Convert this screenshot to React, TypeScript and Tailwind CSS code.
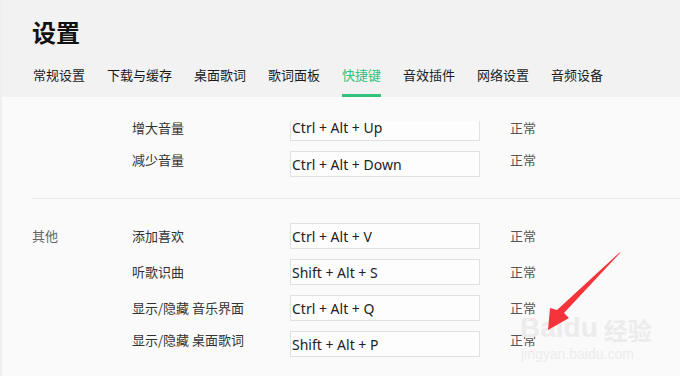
const tabs = ["常规设置", "下载与缓存", "桌面歌词", "歌词面板", "快捷键", "音效插件", "网络设置", "音频设备"];

type Row = { group?: string; label: string; keys: string; lift?: boolean };

const volumeRows: Row[] = [
  { label: "减少音量", keys: "Ctrl + Alt + Down", lift: true },
];

const otherRows: Row[] = [
  { group: "其他", label: "添加喜欢", keys: "Ctrl + Alt + V" },
  { label: "听歌识曲", keys: "Shift + Alt + S" },
  { label: "显示/隐藏 音乐界面", keys: "Ctrl + Alt + Q" },
  { label: "显示/隐藏 桌面歌词", keys: "Shift + Alt + P", lift: true },
];

const cjk = "font-['Noto_Sans_CJK_SC',sans-serif]";

function ShortcutRow({ row }: { row: Row }) {
  return (
    <div className="flex items-center h-[26px]">
      <div className={`w-[100px] text-[13px] text-[#666] ${cjk}`}>{row.group}</div>
      <div className={`w-[158px] text-[13px] text-[#333] ${cjk} ${row.lift ? "mb-[8px]" : ""}`}>
        {row.label}
      </div>
      <div className="w-[190px] h-[26px] border border-[#e1e1e1] bg-[#fdfdfd] flex items-center pl-[1px] text-[14px] text-[#222] font-['Noto_Sans',sans-serif]">
        {row.keys}
      </div>
      <div className={`ml-[30px] text-[13px] text-[#555] ${cjk} ${row.lift ? "mb-[8px]" : ""}`}>正常</div>
    </div>
  );
}

export default function App() {
  return (
    <div className="relative w-[680px] h-[376px] overflow-hidden bg-[#fafafa] border-l-2 border-[#efefef]">
      {/* Header */}
      <div className="h-[97px] bg-[#f2f2f2] pl-[30px] pt-[16px]">
        <h1 className={`text-[24px] leading-[32px] font-bold text-[#111] ${cjk}`}>设置</h1>
        <div className="flex gap-[22px] mt-[17px] ml-[1px]">
          {tabs.map((t) => {
            const active = t === "快捷键";
            return (
              <div key={t} className="flex flex-col">
                <span
                  className={`text-[13px] leading-[20px] ${cjk} ${active ? "text-[#31c27c]" : "text-[#1a1a1a]"}`}
                >
                  {t}
                </span>
                <div className={`h-[3px] mt-[9px] ${active ? "bg-[#31c27c]" : "bg-transparent"}`} />
              </div>
            );
          })}
        </div>
      </div>

      {/* Shortcut list */}
      <div className="pl-[30px] pt-[24px]">
        {/* first row, its top scrolled under the header */}
        <div className="flex items-start h-[20px]">
          <div className="w-[100px]" />
          <div className={`w-[158px] text-[13px] leading-[14px] text-[#333] ${cjk}`}>增大音量</div>
          <div className="w-[190px] h-[20px] border border-t-0 border-[#e1e1e1] bg-[#fdfdfd] pl-[1px] text-[14px] leading-[14px] text-[#222] font-['Noto_Sans',sans-serif]">
            Ctrl + Alt + Up
          </div>
          <div className={`ml-[30px] text-[13px] leading-[14px] text-[#555] ${cjk}`}>正常</div>
        </div>
        <div className="flex flex-col gap-[10px] mt-[10px]">
          {volumeRows.map((r) => (
            <ShortcutRow key={r.label} row={r} />
          ))}
        </div>

        <div className="h-px bg-[#ececec] mt-[21px]" />

        <div className="flex flex-col gap-[10px] mt-[24px]">
          {otherRows.map((r) => (
            <ShortcutRow key={r.label} row={r} />
          ))}
        </div>
      </div>

      {/* Watermark */}
      <div className="absolute left-[518px] top-[314px] flex items-end gap-[6px] pointer-events-none">
        <span className="text-[28px] font-bold leading-none text-[#ececec] font-['Liberation_Sans',sans-serif]">
          Baidu
        </span>
        <span className={`text-[24px] font-bold leading-none text-[#ececec] ${cjk}`}>经验</span>
      </div>
      <div className="absolute left-[519px] top-[344px] text-[14px] text-[#ececec] font-['Liberation_Sans',sans-serif] pointer-events-none">
        jingyan.baidu.com
      </div>

      {/* Red arrow annotation */}
      <svg className="absolute left-0 top-0 pointer-events-none" width="680" height="376">
        <polygon
          points="619,252 562,313 567,318 546,330 548,308 555,310 617,253"
          fill="#f5333a"
        />
      </svg>
    </div>
  );
}
